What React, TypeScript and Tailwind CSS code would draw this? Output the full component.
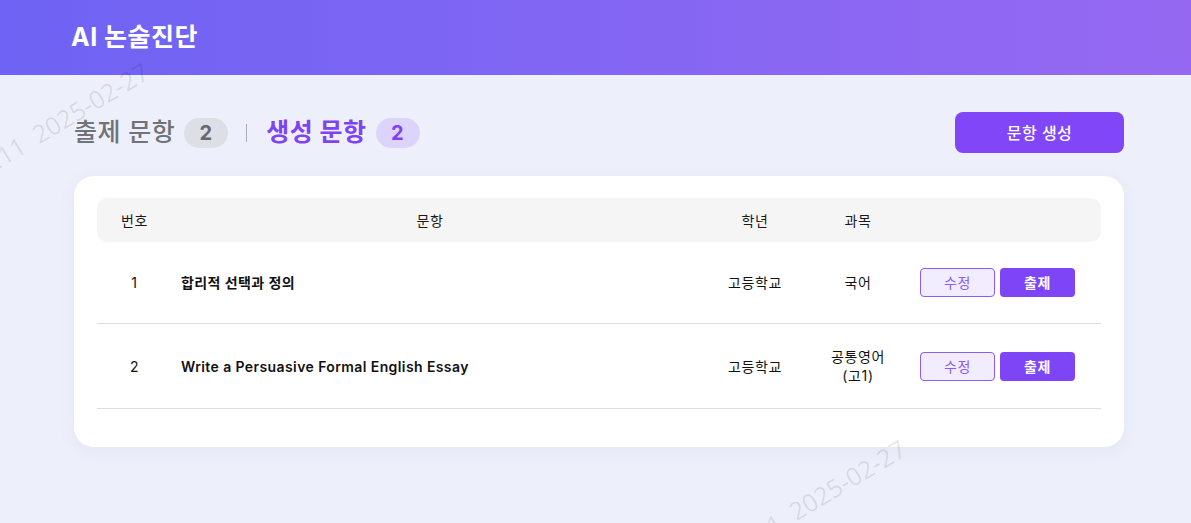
import React from "react";

const rows = [
  { no: 1, title: "합리적 선택과 정의", grade: "고등학교", subject: "국어" },
  { no: 2, title: "Write a Persuasive Formal English Essay", grade: "고등학교", subject: "공통영어 (고1)" },
];

const Watermark = ({ className }: { className: string }) => (
  <div className={`pointer-events-none absolute h-0 w-0 ${className}`}>
    <span className="absolute bottom-0 right-0 origin-bottom-right -rotate-[31deg] whitespace-pre text-[25px] font-normal leading-none tracking-normal text-black/10 [font-family:'Open_Sans','Noto_Sans',sans-serif]">
      {"TE11  2025-02-27"}
    </span>
  </div>
);

export default function App() {
  return (
    <div className="relative min-h-screen overflow-hidden bg-[#edf0fb] tracking-[0.04em] [font-family:Inter,'Noto_Sans_CJK_KR',sans-serif]">
      <header className="flex h-[75px] items-center bg-gradient-to-r from-[#6e63f4] to-[#9668f2] px-[71px]">
        <h1 className="text-[25px] font-bold tracking-[0.5px] text-white">AI 논술진단</h1>
      </header>

      <main className="pl-[74px] pr-[67px] pt-[37px]">
        <div className="flex items-center justify-between">
          <div className="flex items-center">
            <span className="text-[25px] font-medium tracking-[0.5px] text-[#707378]">출제 문항</span>
            <span className="ml-[9px] flex h-[30px] w-[44px] items-center justify-center rounded-full bg-[#dcdfe6] text-[20px] font-bold text-[#666a70]">
              2
            </span>
            <span className="ml-[18px] h-[18px] w-px bg-[#a9acb3]" />
            <span className="ml-[19px] text-[25px] font-bold tracking-[0.5px] text-[#7f43f3]">생성 문항</span>
            <span className="ml-[9px] flex h-[30px] w-[44px] items-center justify-center rounded-full bg-[#ddd4fc] text-[20px] font-bold text-[#7f43f3]">
              2
            </span>
          </div>
          <button className="h-[41px] w-[169px] rounded-lg bg-[#8046f7] text-[16px] font-medium tracking-[0.5px] text-white">
            문항 생성
          </button>
        </div>

        <div className="mt-[23px] rounded-[20px] bg-white px-[23px] pb-[38px] pt-[22px] shadow-[0_4px_18px_rgba(60,70,120,0.06)]">
          <div className="grid h-[44px] grid-cols-[75px_516px_134px_72px_1fr] items-center rounded-[10px] bg-[#f5f5f5] text-[14px] text-[#1a1a1a]">
            <div className="text-center">번호</div>
            <div className="text-center">문항</div>
            <div className="text-center">학년</div>
            <div className="text-center">과목</div>
            <div />
          </div>
          {rows.map((r) => (
            <div
              key={r.no}
              className="grid min-h-[82px] grid-cols-[75px_516px_134px_72px_1fr] items-center border-b border-[#dcdcdc] py-[23px] text-[14px] leading-[19px] text-[#111]"
            >
              <div className="text-center">{r.no}</div>
              <div className="pl-[9px] font-semibold tracking-[0.4px]">{r.title}</div>
              <div className="text-center">{r.grade}</div>
              <div className="text-center">{r.subject}</div>
              <div className="flex justify-center gap-[5px]">
                <button className="h-[29px] w-[75px] rounded-[4px] border border-[#8b5cf6] bg-[#f1edfe] text-[14px] text-[#8b5cf6]">
                  수정
                </button>
                <button className="h-[29px] w-[75px] rounded-[4px] bg-[#7d45f6] text-[14px] font-semibold text-white">
                  출제
                </button>
              </div>
            </div>
          ))}
        </div>
      </main>

      <Watermark className="left-[153px] top-[80px]" />
      <Watermark className="left-[910px] top-[457px]" />
    </div>
  );
}
